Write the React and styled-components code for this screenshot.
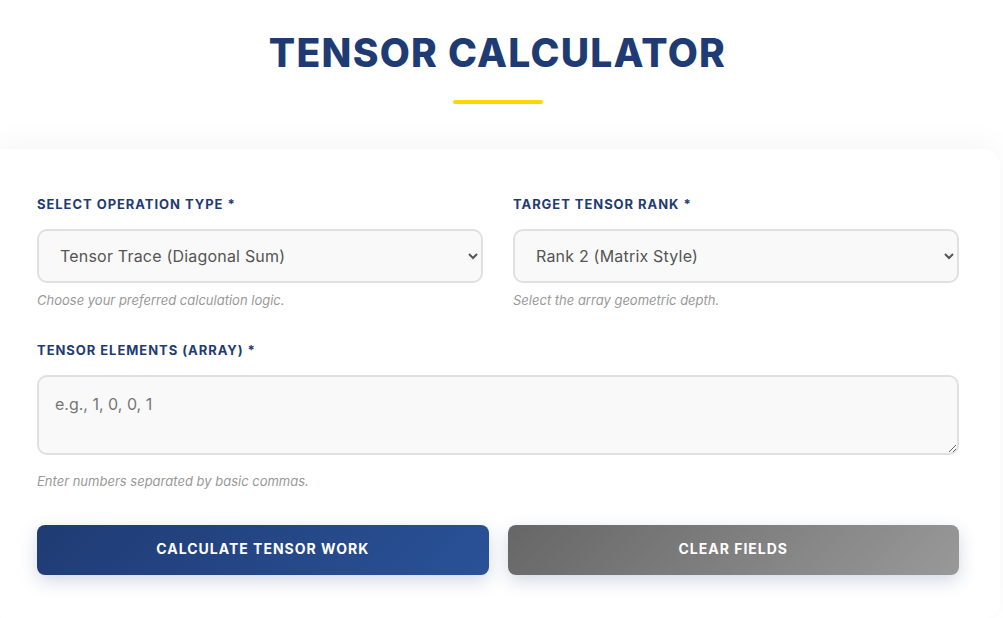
import styled, { createGlobalStyle } from 'styled-components';

const GlobalStyle = createGlobalStyle`
  * {
    box-sizing: border-box;
  }

  body {
    margin: 0;
    background: #ffffff;
    font-family: Inter, 'Liberation Sans', sans-serif;
    overflow: hidden;
  }
`;

const App = () => {
  return (
    <>
      <GlobalStyle />
      <Page>
        <Header>
          <Title>Tensor Calculator</Title>
          <Underline />
        </Header>
        <Card>
          <FieldGrid>
            <FormGroup>
              <Label>Select Operation Type *</Label>
              <Select defaultValue="trace">
                <option value="trace">Tensor Trace (Diagonal Sum)</option>
                <option value="add">Tensor Addition</option>
                <option value="product">Tensor Product</option>
              </Select>
              <Helper>Choose your preferred calculation logic.</Helper>
            </FormGroup>
            <FormGroup>
              <Label>Target Tensor Rank *</Label>
              <Select defaultValue="2">
                <option value="1">Rank 1 (Vector Style)</option>
                <option value="2">Rank 2 (Matrix Style)</option>
                <option value="3">Rank 3 (Cube Style)</option>
              </Select>
              <Helper>Select the array geometric depth.</Helper>
            </FormGroup>
            <FormGroup $wide>
              <Label>Tensor Elements (Array) *</Label>
              <TextArea placeholder="e.g., 1, 0, 0, 1" />
              <Helper $spaced>Enter numbers separated by basic commas.</Helper>
            </FormGroup>
          </FieldGrid>
          <ButtonRow>
            <ActionButton $variant="primary">Calculate Tensor Work</ActionButton>
            <ActionButton $variant="secondary">Clear Fields</ActionButton>
          </ButtonRow>
        </Card>
      </Page>
    </>
  );
};

const Page = styled.div`
  display: flex;
  flex-direction: column;
  min-height: 618px;
`;

const Header = styled.header`
  display: flex;
  flex-direction: column;
  align-items: center;
  padding: 28px 8px 0 0;
  height: 149px;
`;

const Title = styled.h1`
  margin: 0;
  font-family: Inter, 'Liberation Sans', sans-serif;
  font-size: 39px;
  font-weight: 800;
  line-height: 50px;
  letter-spacing: 1.25px;
  text-transform: uppercase;
  color: #1f3b73;
`;

const Underline = styled.div`
  width: 90px;
  height: 4px;
  margin-top: 22px;
  border-radius: 2px;
  background: #ffd700;
`;

const Card = styled.main`
  margin: 0 3px 0 -10px;
  padding: 45px 41px 40px 47px;
  background: #ffffff;
  border-radius: 16px;
  box-shadow: 0 -6px 30px rgba(0, 0, 0, 0.04);
  flex: 1;
`;

const FieldGrid = styled.div`
  display: grid;
  grid-template-columns: 1fr 1fr;
  column-gap: 30px;
  row-gap: 31px;
`;

const FormGroup = styled.div`
  display: flex;
  flex-direction: column;
  grid-column: ${(p) => (p.$wide ? '1 / -1' : 'auto')};
`;

const Label = styled.label`
  font-size: 13px;
  font-weight: 700;
  line-height: 20px;
  letter-spacing: 0.95px;
  text-transform: uppercase;
  color: #1f3b73;
  margin-bottom: 15px;
`;

const Select = styled.select`
  height: 54px;
  padding: 0 12px 0 17px;
  border: 2px solid #e0e0e0;
  border-radius: 10px;
  background: #f9f9f9;
  font-family: Inter, 'Liberation Sans', sans-serif;
  font-size: 16px;
  letter-spacing: 0.2px;
  color: #555555;
  outline: none;
`;

const TextArea = styled.textarea`
  display: block;
  height: 80px;
  padding: 17px 16px;
  border: 2px solid #e0e0e0;
  border-radius: 10px;
  background: #f9f9f9;
  font-family: Inter, 'Liberation Sans', sans-serif;
  font-size: 16px;
  color: #555555;
  outline: none;
  resize: vertical;

  &::placeholder {
    color: #777777;
  }
`;

const Helper = styled.small`
  margin-top: ${(p) => (p.$spaced ? '17px' : '8px')};
  font-size: 13px;
  line-height: 18px;
  font-style: italic;
  color: #999999;
`;

const ButtonRow = styled.div`
  display: grid;
  grid-template-columns: 1fr 1fr;
  gap: 19px;
  margin-top: 35px;
`;

const ActionButton = styled.button`
  height: 50px;
  padding: 0 0 4px;
  border: none;
  border-radius: 8px;
  font-family: Inter, 'Liberation Sans', sans-serif;
  font-size: 14px;
  font-weight: 700;
  letter-spacing: 1px;
  text-transform: uppercase;
  color: #ffffff;
  cursor: pointer;
  background: ${(p) =>
    p.$variant === 'primary'
      ? 'linear-gradient(135deg, #1f3b73 0%, #2a5298 100%)'
      : 'linear-gradient(135deg, #666666 0%, #999999 100%)'};
  box-shadow: 0 6px 18px rgba(30, 60, 114, 0.2);
`;

export default App;
